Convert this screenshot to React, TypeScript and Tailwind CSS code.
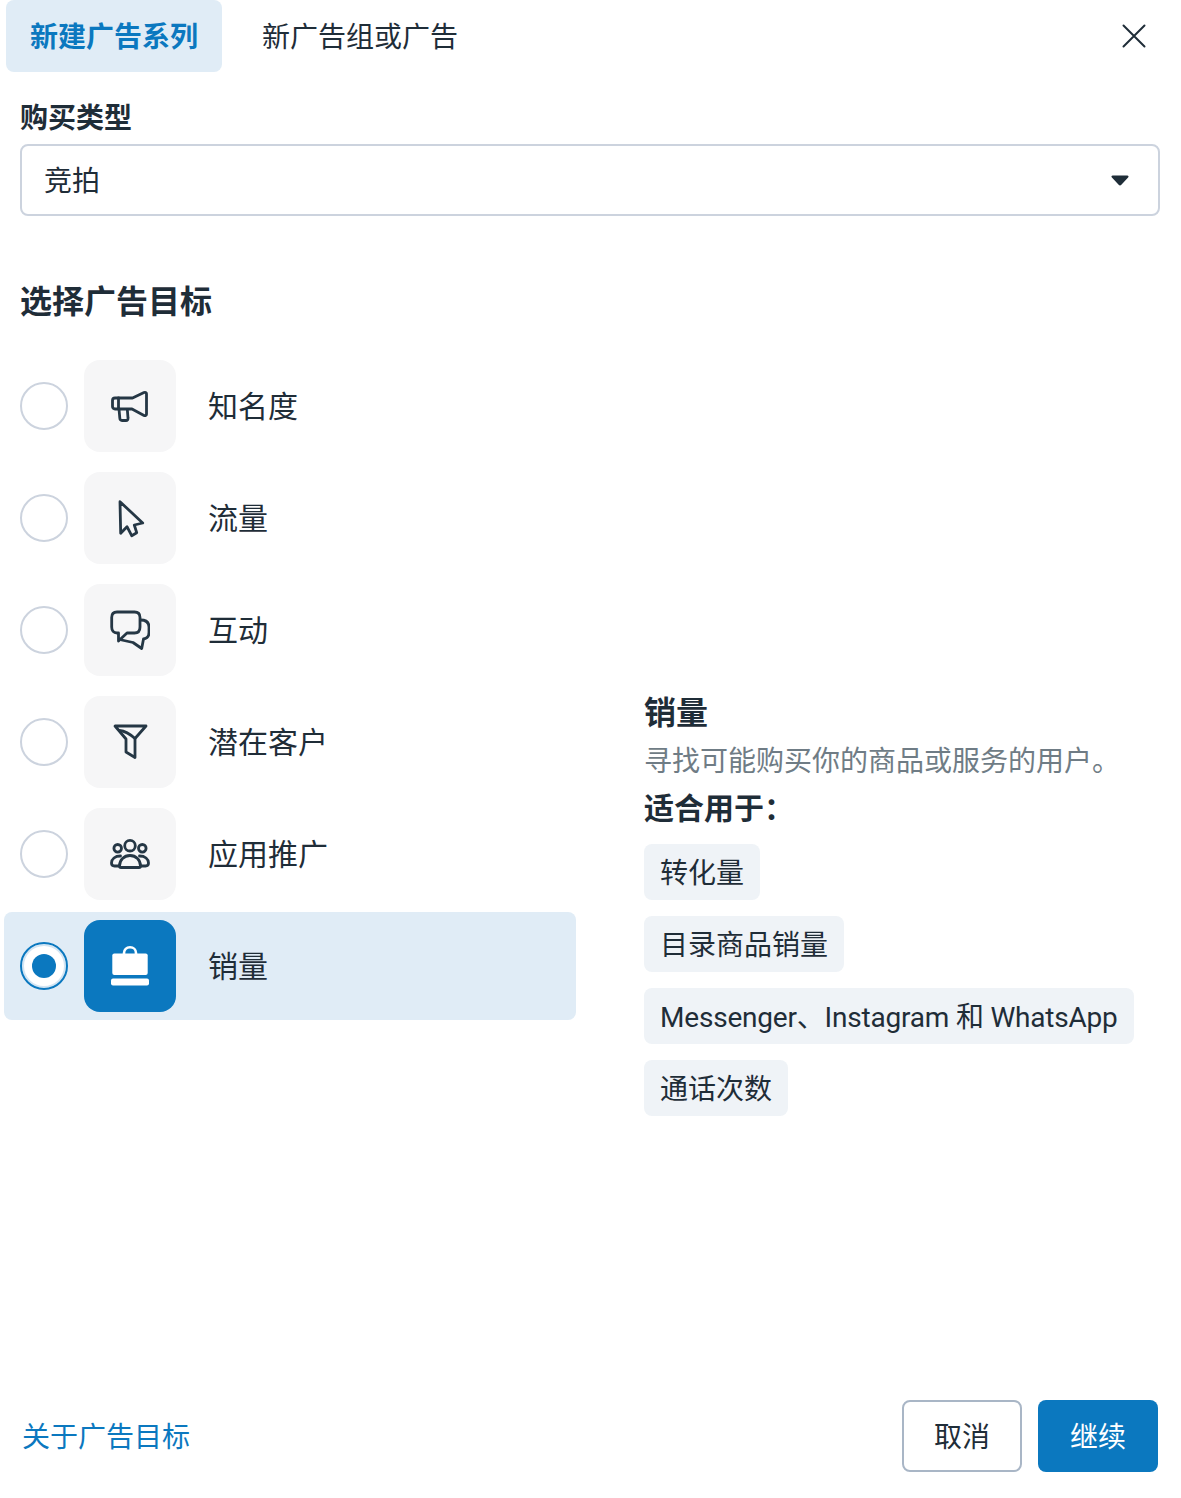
import type { ReactNode } from 'react'

const font = { fontFamily: '"Noto Sans", "Noto Sans CJK SC", sans-serif' }

const icons: Record<string, ReactNode> = {
  megaphone: (
    <>
      <path d="M5 12h17.500l11.500-5.500c1.200-.5 2.500 0 2.500 1.200v20.600c0 1.200-1.300 1.700-2.500 1.200L22 23H5c-1.500 0-2.500-1-2.500-2.500v-6C2.500 13 3.500 12 5 12z" />
      <path d="M8.500 12v11" />
      <path d="M9 23l.8 9c.1 1.500 1 2.500 2.200 2.500h4c1.400 0 2.200-1 2-2.500l-.6-7.500" />
    </>
  ),
  cursor: <path d="M10 3.700L32.700 25l-8.400 2 2.400 7.700-5 3L17 28.700l-6.300 6.600z" />,
  chat: (
    <>
      <path d="M7 2h17.500c3.500 0 5.500 2 5.500 5.500V17c0 3.700-2 6-5.500 6H17l-8.500 8v-8H7c-3.400 0-5.300-2.300-5.300-6V7.500C1.700 4 3.600 2 7 2z" />
      <path d="M30.500 10c5 0 8.500 2.300 8.500 7v5.500c0 3.500-2 6-5.500 6.500l-1.800 9.500-8.700-6-11.300-2.500" />
    </>
  ),
  funnel: (
    <>
      <path d="M5 4h31L25 16.500V35.500L16 30V17z" />
      <path d="M9.500 8.500C14 9 20 12 25 16.500" />
    </>
  ),
  users: (
    <>
      <circle cx="20" cy="11.700" r="5.300" />
      <circle cx="7.700" cy="14.300" r="3.800" />
      <circle cx="32.300" cy="14.300" r="3.800" />
      <path d="M11 33.500h18c1 0 1.500-.5 1.500-1.500 0-6-4.500-10.500-10.500-10.500S9.500 26 9.500 32c0 1 .5 1.500 1.500 1.500z" />
      <path d="M10.500 22C5 22 1.500 25 1.500 29c0 2 1 3 3 3H9" />
      <path d="M29.500 22c5.500 0 9 3 9 7 0 2-1 3-3 3H31" />
    </>
  ),
}

const objectives = [
  { key: 'megaphone', label: '知名度' },
  { key: 'cursor', label: '流量' },
  { key: 'chat', label: '互动' },
  { key: 'funnel', label: '潜在客户' },
  { key: 'users', label: '应用推广' },
]

function ObjectiveRow({ icon, label }: { icon: string; label: string }) {
  return (
    <div className="flex h-[108px] items-center rounded-lg pl-4">
      <span className="h-12 w-12 rounded-full border-2 border-[#ccd3de] bg-white" />
      <span className="ml-4 flex h-[92px] w-[92px] items-center justify-center rounded-2xl bg-[#f6f6f7]">
        <svg width="40" height="40" viewBox="0 0 40 40" fill="none" stroke="#253745" strokeWidth="2.800" strokeLinejoin="round" strokeLinecap="round">
          {icons[icon]}
        </svg>
      </span>
      <span className="ml-8 text-[30px] leading-[40px] text-[#1f2d38]">{label}</span>
    </div>
  )
}

export default function App() {
  return (
    <div className="flex h-[1498px] w-[1181px] flex-col bg-white text-[#1f2d38]" style={font}>
      {/* tabs */}
      <div className="flex items-start pl-1.5 pr-[35px]">
        <div className="flex h-[72px] items-center rounded-lg bg-[#e0ecf6] px-6 text-[28px] font-bold text-[#0b78bf]">新建广告系列</div>
        <div className="ml-4 flex h-[72px] items-center px-6 text-[28px]">新广告组或广告</div>
        <svg className="mt-6 ml-auto" width="24" height="24" viewBox="0 0 24 24" fill="none" stroke="#1f2d38" strokeWidth="2" strokeLinecap="round">
          <path d="M1.500 1.500l21 21M22.500 1.500l-21 21" />
        </svg>
      </div>

      {/* purchase type */}
      <div className="mt-[23px] px-5">
        <div className="text-[28px] leading-[44px] font-bold">购买类型</div>
        <div className="mt-[5px] flex h-[72px] w-[1140px] items-center justify-between rounded-lg border-2 border-[#ccd3de] pr-[29px] pl-[22px] text-[28px]">
          <span>竞拍</span>
          <svg className="mt-px" width="18" height="11" viewBox="0 0 20 12" fill="#1f2d38">
            <path d="M2 .5h16c1.500 0 2 1.300 1 2.300l-7.500 8c-.9.9-2.100.9-3 0l-7.500-8C0 1.800.5.500 2 .5z" />
          </svg>
        </div>
      </div>

      <div className="mt-[61px] pl-5 text-[32px] leading-[48px] font-bold">选择广告目标</div>

      <div className="mt-[27px] flex items-start pl-1">
        {/* objective list */}
        <div className="flex w-[572px] flex-col gap-1">
          {objectives.map((o) => (
            <ObjectiveRow key={o.key} icon={o.key} label={o.label} />
          ))}
          <div className="flex h-[108px] items-center rounded-lg bg-[#e0ecf6] pl-4">
            <span className="flex h-12 w-12 items-center justify-center rounded-full border-2 border-[#0b78bf] bg-white shadow-[inset_0_0_0_2px_#d3e5f3]">
              <span className="h-6 w-6 rounded-full bg-[#0b78bf]" />
            </span>
            <span className="ml-4 flex h-[92px] w-[92px] items-center justify-center rounded-2xl bg-[#0b78bf]">
              <svg width="40" height="40" viewBox="0 0 40 40" fill="white">
                <path d="M14 8V7c0-3.500 2.500-5.700 6-5.700S26 3.500 26 7v1" fill="none" stroke="white" strokeWidth="2.600" />
                <rect x="2.300" y="7.500" width="35.400" height="21.500" rx="2" />
                <rect x="1" y="32.500" width="38" height="7" rx="2" />
              </svg>
            </span>
            <span className="ml-8 text-[30px] leading-[40px]">销量</span>
          </div>
        </div>

        {/* details */}
        <div className="mt-[338px] ml-[68px] flex flex-col items-start">
          <div className="text-[32px] leading-[44px] font-bold">销量</div>
          <div className="mt-[2px] text-[28px] leading-[48px] text-[#6f7c85]">寻找可能购买你的商品或服务的用户。</div>
          <div className="text-[30px] leading-[48px] font-bold">适合用于：</div>
          <div className="mt-[12px] flex flex-col items-start gap-4">
            <div className="flex h-14 items-center rounded-lg bg-[#eff3f7] px-4 text-[28px]">转化量</div>
            <div className="flex h-14 items-center rounded-lg bg-[#eff3f7] px-4 text-[28px]">目录商品销量</div>
            <div className="flex h-14 items-center rounded-lg bg-[#eff3f7] px-4 pt-1 font-['Roboto','Noto_Sans_CJK_SC',sans-serif] text-[28px] tracking-[-0.2px]">
              Messenger、Instagram 和 WhatsApp
            </div>
            <div className="flex h-14 items-center rounded-lg bg-[#eff3f7] px-4 text-[28px]">通话次数</div>
          </div>
        </div>
      </div>

      {/* footer */}
      <div className="mt-auto mb-[26px] flex items-center justify-between pr-[23px] pl-[22px]">
        <span className="text-[28px] text-[#0b78bf]">关于广告目标</span>
        <div className="flex gap-4">
          <button className="h-[72px] w-[120px] rounded-lg border-2 border-[#a9b6c6] bg-white text-[28px]">取消</button>
          <button className="h-[72px] w-[120px] rounded-lg bg-[#0b78bf] text-[28px] text-white">继续</button>
        </div>
      </div>
    </div>
  )
}
